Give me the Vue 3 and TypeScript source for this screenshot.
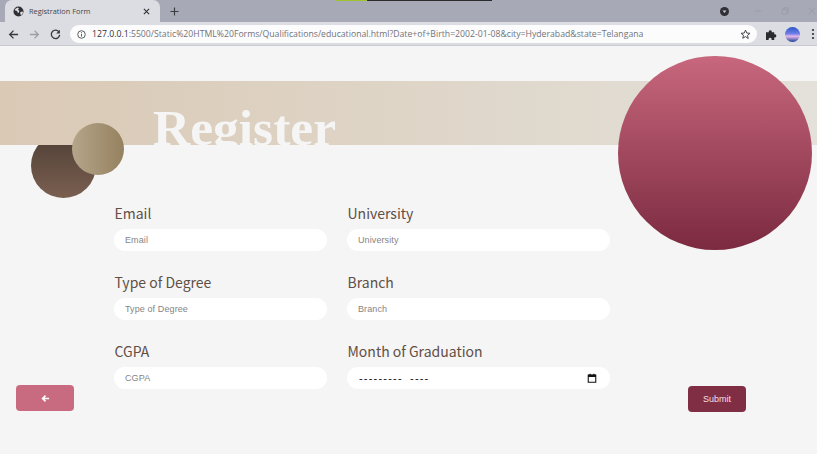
<template>
  <div class="page">
    <!-- browser chrome -->
    <div class="tabstrip">
      <div class="tab">
        <svg class="globe" viewBox="0 0 12 12"><circle cx="6" cy="6" r="5.5" fill="#2f3033" /><path d="M2 3.500l3-2 1.500 1-1 1.500 1.500 1.500-1 2-1-.5-.5-1.500L2.500 5zM8 6.500l2.500-.5.5 1.500-2 2.500-1-1z" fill="#dcdde1" /></svg>
        <span class="tab-title">Registration Form</span>
        <svg class="tab-close" viewBox="0 0 8 8"><path d="M1 1l6 6M7 1l-6 6" stroke="#333" stroke-width="1.300" /></svg>
      </div>
      <svg class="tab-plus" viewBox="0 0 10 10"><path d="M5 .5v9M.5 5h9" stroke="#3b3d42" stroke-width="1.300" /></svg>
      <div class="loading"><span class="green"></span><span class="black"></span></div>
      <div class="strip-right">
        <svg class="media" viewBox="0 0 10 10"><circle cx="5" cy="5" r="5" fill="#303136" /><path d="M2.800 4h4.400L5 6.600z" fill="#c9cad0" /></svg>
        <svg class="win" viewBox="0 0 10 10"><path d="M1 5h8" stroke="#989aa5" /></svg>
        <svg class="win" viewBox="0 0 10 10"><path d="M1.500 3h6v6h-6zM3.500 3V1h5.500v6H7.500" fill="none" stroke="#989aa5" /></svg>
        <svg class="win" viewBox="0 0 10 10"><path d="M1 1l8 8M9 1l-8 8" stroke="#989aa5" /></svg>
      </div>
    </div>
    <div class="toolbar">
      <svg class="nav" viewBox="0 0 12 12"><path d="M11 6H2M6 1.800L1.800 6 6 10.200" fill="none" stroke="#37393e" stroke-width="1.400" /></svg>
      <svg class="nav" viewBox="0 0 12 12"><path d="M1 6h9M6 1.800L10.200 6 6 10.200" fill="none" stroke="#9b9da3" stroke-width="1.400" /></svg>
      <svg class="nav" viewBox="0 0 12 12"><path d="M10 3.500A4.600 4.600 0 1 0 10.600 6.500" fill="none" stroke="#37393e" stroke-width="1.400" /><path d="M10.800 .8v4h-4z" fill="#37393e" /></svg>
      <div class="omnibox">
        <svg class="info" viewBox="0 0 10 10"><circle cx="5" cy="5" r="4.200" fill="none" stroke="#4a4c50" /><path d="M5 4.300v3M5 2.500v1" stroke="#4a4c50" /></svg>
        <span class="url"><b>127.0.0.1</b>:5500/Static%20HTML%20Forms/Qualifications/educational.html?Date+of+Birth=2002-01-08&amp;city=Hyderabad&amp;state=Telangana</span>
        <svg class="star" viewBox="0 0 12 12"><path d="M6 1.200l1.400 3.200 3.500.3-2.700 2.300.8 3.400L6 8.300l-3 1.800.8-3.400L1.100 4.700l3.500-.3z" fill="none" stroke="#37393e" /></svg>
      </div>
      <svg class="puzzle" viewBox="0 0 12 12"><path d="M0 3.500h3a1.700 1.700 0 1 1 3.300 0H9v2.300a1.700 1.700 0 1 1 0 3.200V12H6a1.700 1.700 0 1 0-3 0H0z" fill="#2a2b2f" /></svg>
      <div class="avatar"></div>
      <svg class="dots" viewBox="0 0 4 12"><circle cx="2" cy="2" r="1.100" /><circle cx="2" cy="6" r="1.100" /><circle cx="2" cy="10" r="1.100" /></svg>
    </div>

    <!-- page content -->
    <main class="content">
      <div class="circle circle-dark"></div>
      <div class="banner">
        <h1 class="title">Register</h1>
      </div>
      <div class="circle circle-tan"></div>
      <div class="circle circle-red"></div>

      <div class="body">
        <button class="btn btn-back" type="button" aria-label="Back">
          <svg viewBox="0 0 10 10"><path d="M9 5H2M5 1.800L1.800 5 5 8.200" fill="none" stroke="#fff" stroke-width="1.800" /></svg>
        </button>
        <form class="form" @submit.prevent>
          <div v-for="f in fields" :key="f.label" class="field">
            <label class="label">{{ f.label }}</label>
            <div class="input-wrap">
              <input
                v-if="f.month"
                class="input input-month"
                type="text"
                value="--------- ----"
                readonly
              />
              <input v-else class="input" type="text" :placeholder="f.label" />
              <svg v-if="f.month" class="calendar" viewBox="0 0 12 12"><path d="M1.500 2.500h9v8.500h-9z" fill="none" stroke="#111" stroke-width="1.300" /><path d="M1.500 2h9v2.800h-9zM3 .8h1.300V3H3zM7.700 .8H9V3H7.700z" fill="#111" /></svg>
            </div>
          </div>
        </form>
        <button class="btn btn-submit" type="button">Submit</button>
      </div>
    </main>
  </div>
</template>

<script setup lang="ts">
interface Field {
  label: string;
  month?: boolean;
}

const fields: Field[] = [
  { label: 'Email' },
  { label: 'University' },
  { label: 'Type of Degree' },
  { label: 'Branch' },
  { label: 'CGPA' },
  { label: 'Month of Graduation', month: true },
];
</script>

<style>
html,
body {
  margin: 0;
  background: #f5f5f5;
  overflow: hidden;
}
</style>

<style scoped>
.page {
  width: 817px;
  height: 454px;
  display: flex;
  flex-direction: column;
  background: #f5f5f5;
  font-family: "Liberation Sans", Arial, sans-serif;
  overflow: hidden;
}

.tabstrip {
  height: 22px;
  flex: none;
  display: flex;
  align-items: flex-end;
  background: #a7aab6;
  padding-left: 5px;
  position: relative;
}

.tab {
  width: 155px;
  height: 22px;
  display: flex;
  align-items: center;
  background: #dcdde2;
  border-radius: 7px 7px 0 0;
  box-sizing: border-box;
  padding: 0 7px 0 8px;
}

.globe {
  width: 11px;
  height: 11px;
}

.tab-title {
  margin-left: 5px;
  font: 7.400px "Open Sans", sans-serif;
  color: #45474c;
  flex: 1;
}

.tab-close {
  width: 7px;
  height: 7px;
  margin-right: 3px;
}

.tab-plus {
  width: 9px;
  height: 9px;
  margin: 0 0 6px 10px;
}

.loading {
  position: absolute;
  top: 0;
  left: 336px;
  display: flex;
  height: 1px;
}

.green {
  width: 31px;
  background: #9fc22f;
}

.black {
  width: 125px;
  background: #2b2b2b;
}

.strip-right {
  margin-left: auto;
  align-self: center;
  display: flex;
  align-items: center;
}

.media {
  width: 9px;
  height: 9px;
  margin-right: 25px;
}

.win {
  width: 8px;
  height: 8px;
  margin-right: 19px;
}

.win:last-child {
  margin-right: 1px;
}

.toolbar {
  height: 24px;
  flex: none;
  box-sizing: border-box;
  display: flex;
  align-items: center;
  background: #dcdde2;
  border-bottom: 1px solid #c9cad2;
  padding: 1px 0 0 8px;
}

.nav {
  width: 11px;
  height: 11px;
  margin-right: 10px;
}

.omnibox {
  width: 687px;
  height: 18px;
  margin-left: -1px;
  box-sizing: border-box;
  display: flex;
  align-items: center;
  background: #fcfcfd;
  border-radius: 9px;
  padding: 0 6px 0 7px;
}

.info {
  width: 9px;
  height: 9px;
}

.url {
  margin-left: 6px;
  font: 8.700px "Open Sans", sans-serif;
  color: #71737a;
  flex: 1;
  white-space: nowrap;
}

.url b {
  font-weight: 400;
  color: #303136;
}

.star {
  width: 11px;
  height: 11px;
}

.puzzle {
  width: 11px;
  height: 11px;
  margin-left: 9px;
}

.avatar {
  width: 15px;
  height: 15px;
  margin-left: 8px;
  border-radius: 50%;
  background: linear-gradient(180deg, #2a55c8 0%, #6f7fe8 45%, #e7b8e8 62%, #1b3f9a 100%);
}

.dots {
  width: 4px;
  height: 12px;
  margin-left: 11px;
  fill: #2f3034;
}

.content {
  position: relative;
  flex: 1;
  min-height: 0;
}

.banner {
  position: relative;
  height: 64px;
  margin-top: 35px;
  background: linear-gradient(90deg, #dac9b5 0%, #e3e1da 100%);
  overflow: hidden;
  padding-left: 153px;
}

.title {
  margin: 0;
  padding-top: 15px;
  font: 700 51.500px/64px "Liberation Serif", serif;
  color: #f5f5f5;
}

.circle {
  position: absolute;
  border-radius: 50%;
}

.circle-dark {
  left: 31px;
  top: 87px;
  width: 65px;
  height: 65px;
  background: linear-gradient(180deg, #4f3f36 0%, #7a5f50 100%);
}

.circle-tan {
  left: 72px;
  top: 77px;
  width: 52px;
  height: 52px;
  background: linear-gradient(90deg, #b5a58a 0%, #94815f 100%);
}

.circle-red {
  left: 618px;
  top: 10px;
  width: 194px;
  height: 194px;
  background: linear-gradient(180deg, #c8677d 0%, #7b2a40 100%);
}

.body {
  display: flex;
  margin-top: 55px;
  position: relative;
}

.btn {
  border: none;
  padding: 0;
  border-radius: 4px;
  align-self: flex-end;
  flex: none;
}

.btn-back {
  width: 58px;
  height: 26px;
  margin-left: 16px;
  background: #c96b80;
  display: flex;
  align-items: center;
  justify-content: center;
}

.btn-back svg {
  width: 9px;
  height: 9px;
}

.btn-submit {
  width: 58px;
  height: 26px;
  margin: 0 0 -1px 78px;
  background: #7f2e44;
  color: #f3dfe5;
  font: 9px "Liberation Sans", sans-serif;
}

.form {
  margin-left: 40px;
  padding-bottom: 22px;
  display: grid;
  grid-template-columns: 213px 263px;
  column-gap: 20px;
  row-gap: 18px;
}

.field {
  display: flex;
  flex-direction: column;
}

.label {
  height: 29px;
  padding-left: 0.5px;
  font: 400 14px/26px "Noto Sans CJK SC", "Noto Sans", sans-serif;
  color: #5f4f45;
}

.input-wrap {
  position: relative;
  display: flex;
}

.input {
  width: 100%;
  height: 22px;
  box-sizing: border-box;
  border: none;
  outline: none;
  border-radius: 11px;
  background: #fff;
  padding: 0 11px;
  font: 9px "Liberation Sans", sans-serif;
  letter-spacing: 0.1px;
  color: #222;
}

.input::placeholder {
  color: #858585;
}

.input-month {
  padding-left: 12px;
  font-size: 11px;
  letter-spacing: 1.2px;
  word-spacing: 3px;
  color: #111;
}

.calendar {
  position: absolute;
  right: 13px;
  top: 6px;
  width: 10px;
  height: 10px;
}
</style>
